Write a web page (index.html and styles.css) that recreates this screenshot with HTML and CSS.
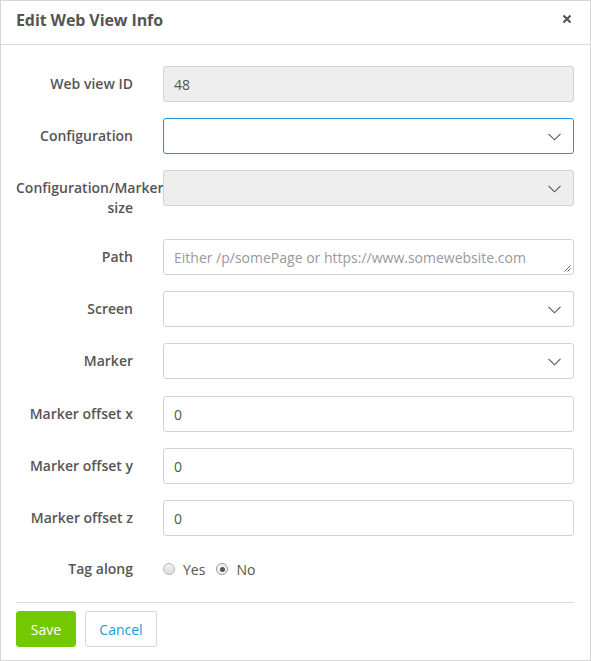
FILE: index.html
```html
<!DOCTYPE html>
<html>
<head>
<meta charset="utf-8">
<link rel="stylesheet" href="styles.css">
</head>
<body>
<div class="modal">
  <div class="modal-header">
    <h4 class="modal-title">Edit Web View Info</h4>
    <button class="close" type="button" aria-label="Close">
      <svg width="10" height="10" viewBox="0 0 10 10"><path d="M1.5 1.5 L8.5 8.5 M8.5 1.5 L1.5 8.5" stroke="#555" stroke-width="2.2" stroke-linecap="butt"/></svg>
    </button>
  </div>
  <div class="modal-body">
    <form class="form">
      <div class="form-group">
        <label class="control-label">Web view ID</label>
        <div class="control"><div class="input disabled">48</div></div>
      </div>
      <div class="form-group">
        <label class="control-label">Configuration</label>
        <div class="control"><div class="input select focus"><span></span><svg class="chev" width="13" height="8" viewBox="0 0 13 8"><path d="M0.5 0.8 L6.5 6.8 L12.5 0.8" fill="none" stroke="#555" stroke-width="1.1"/></svg></div></div>
      </div>
      <div class="form-group">
        <label class="control-label two">Configuration/Marker size</label>
        <div class="control"><div class="input select disabled"><span></span><svg class="chev" width="13" height="8" viewBox="0 0 13 8"><path d="M0.5 0.8 L6.5 6.8 L12.5 0.8" fill="none" stroke="#555" stroke-width="1.1"/></svg></div></div>
      </div>
      <div class="form-group">
        <label class="control-label">Path</label>
        <div class="control"><div class="input textarea"><span class="placeholder">Either /p/somePage or https://www.somewebsite.com</span><svg class="grip" width="7" height="7" viewBox="0 0 7 7"><path d="M6.5 0.5 L0.5 6.5 M6.5 3.5 L3.5 6.5" stroke="#555" stroke-width="0.9"/></svg></div></div>
      </div>
      <div class="form-group">
        <label class="control-label">Screen</label>
        <div class="control"><div class="input select"><span></span><svg class="chev" width="13" height="8" viewBox="0 0 13 8"><path d="M0.5 0.8 L6.5 6.8 L12.5 0.8" fill="none" stroke="#555" stroke-width="1.1"/></svg></div></div>
      </div>
      <div class="form-group gap-extra">
        <label class="control-label">Marker</label>
        <div class="control"><div class="input select"><span></span><svg class="chev" width="13" height="8" viewBox="0 0 13 8"><path d="M0.5 0.8 L6.5 6.8 L12.5 0.8" fill="none" stroke="#555" stroke-width="1.1"/></svg></div></div>
      </div>
      <div class="form-group">
        <label class="control-label">Marker offset x</label>
        <div class="control"><div class="input">0</div></div>
      </div>
      <div class="form-group">
        <label class="control-label">Marker offset y</label>
        <div class="control"><div class="input">0</div></div>
      </div>
      <div class="form-group">
        <label class="control-label">Marker offset z</label>
        <div class="control"><div class="input">0</div></div>
      </div>
      <div class="form-group last">
        <label class="control-label">Tag along</label>
        <div class="control radios">
          <label class="radio"><span class="dot"></span>Yes</label>
          <label class="radio"><span class="dot checked"></span>No</label>
        </div>
      </div>
    </form>
    <div class="modal-footer">
      <button class="btn btn-save" type="button">Save</button>
      <button class="btn btn-cancel" type="button">Cancel</button>
    </div>
  </div>
</div>
</body>
</html>
```

FILE: styles.css
```css
* { box-sizing: border-box; }
html, body { margin: 0; padding: 0; background: #fff; }
body {
  font-family: "Open Sans", "Noto Sans", sans-serif;
  font-size: 14px;
  color: #555;
}
.modal {
  width: 591px;
  height: 661px;
  border: 1px solid #d6d6d6;
  background: #fff;
  display: flex;
  flex-direction: column;
}
.modal-header {
  height: 44px;
  border-bottom: 1px solid #dcdcdc;
  display: flex;
  align-items: center;
  justify-content: space-between;
  padding: 0 16px 6px 15px;
}
.modal-title {
  margin: 0;
  font-size: 16px;
  font-weight: 700;
  color: #555;
  letter-spacing: -0.1px;
}
.close {
  border: 0;
  background: none;
  padding: 0;
  margin: 0 2px 2px 0;
  line-height: 0;
}
.modal-body {
  padding: 21px 16px 0 15px;
}
.form-group {
  display: grid;
  grid-template-columns: 117px 1fr;
  column-gap: 30px;
  margin-bottom: 16px;
}
.form-group.gap-extra { margin-bottom: 17px; }
.form-group.last { margin-bottom: 14px; min-height: 36px; }
.control-label {
  text-align: right;
  font-weight: 600;
  line-height: 20px;
  padding: 8px 0 5px;
  white-space: normal;
  color: #555;
}
.form-group.last .control-label { padding-top: 7px; }
.input {
  height: 36px;
  border: 1px solid #d2d2d2;
  border-radius: 3px;
  padding: 0 10px;
  display: flex;
  align-items: center;
  justify-content: space-between;
  color: #555;
  background: #fff;
  position: relative;
}
.input.disabled { background: #eeeeee; }
.input.focus { border-color: #1a97dd; }
.chev { margin-right: 2px; margin-top: 1px; }
.placeholder { color: #999; }
.grip { position: absolute; right: 2px; bottom: 2px; }
.radios {
  display: flex;
  align-items: center;
  gap: 11px;
  height: 34px;
}
.radio {
  display: flex;
  align-items: center;
  gap: 8px;
  color: #555;
}
.dot {
  width: 12px;
  height: 12px;
  border-radius: 50%;
  border: 1px solid #b4b4b4;
  background: linear-gradient(#f4f4f4, #dcdcdc);
  position: relative;
}
.dot.checked { background: #f2f2f2; border-color: #9a9a9a; }
.dot.checked::after {
  content: "";
  position: absolute;
  left: 2.5px;
  top: 2.5px;
  width: 5px;
  height: 5px;
  border-radius: 50%;
  background: #555;
}
.modal-footer {
  border-top: 1px solid #dcdcdc;
  padding-top: 8px;
  display: flex;
  gap: 9px;
}
.btn {
  height: 36px;
  border-radius: 3px;
  font-family: inherit;
  font-size: 14px;
  padding: 0;
  cursor: pointer;
}
.btn-save {
  width: 60px;
  background: #74c800;
  border: 1px solid #74c800;
  color: #fff;
}
.btn-cancel {
  width: 72px;
  background: #fff;
  border: 1px solid #d6d6d6;
  color: #1d9ad6;
}
```
